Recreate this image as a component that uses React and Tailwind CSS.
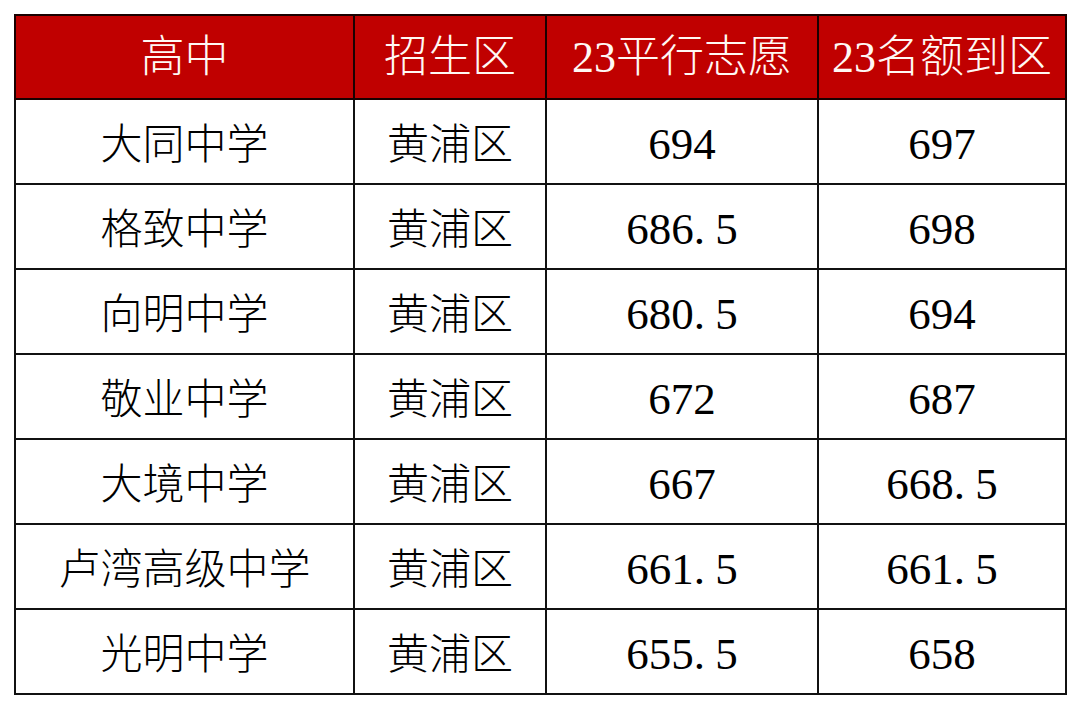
const rows = [
  ['大同中学', '黄浦区', '694', '697'],
  ['格致中学', '黄浦区', '686.5', '698'],
  ['向明中学', '黄浦区', '680.5', '694'],
  ['敬业中学', '黄浦区', '672', '687'],
  ['大境中学', '黄浦区', '667', '668.5'],
  ['卢湾高级中学', '黄浦区', '661.5', '661.5'],
  ['光明中学', '黄浦区', '655.5', '658'],
];

const headers = ['高中', '招生区', '23平行志愿', '23名额到区'];

const fontStack = {
  fontFamily: '"Liberation Serif", "Noto Sans CJK SC", serif',
};

// SimSun style: the period takes a full half-width cell
const Num = ({ value }) => {
  const [a, b] = value.split('.');
  if (b === undefined) return <span className="text-[45px] font-normal">{a}</span>;
  return (
    <span className="text-[45px] font-normal">
      {a}
      <span className="inline-block w-[0.48em] text-left">.</span>
      {b}
    </span>
  );
};

export default function App() {
  return (
    <div className="w-[1080px] h-[707px] bg-white pt-[14px] pl-[14px]" style={fontStack}>
      <table className="table-fixed border-collapse w-[1051px] text-[42px] font-light leading-none text-black">
        <colgroup>
          <col className="w-[339px]" />
          <col className="w-[192px]" />
          <col className="w-[272px]" />
          <col className="w-[248px]" />
        </colgroup>
        <thead>
          <tr className="h-[84px] bg-[#c00000]">
            {headers.map((h) => (
              <th
                key={h}
                className="border-2 border-[#1a0000] font-light text-[44px] text-[#fff8f4] text-center align-middle whitespace-nowrap p-0 pt-[2px]"
              >
                {h}
              </th>
            ))}
          </tr>
        </thead>
        <tbody>
          {rows.map((r) => (
            <tr key={r[0]} className="h-[85px]">
              <td className="border-2 border-[#111] text-center align-middle p-0 pt-[6px]">{r[0]}</td>
              <td className="border-2 border-[#111] text-center align-middle p-0 pt-[6px]">{r[1]}</td>
              <td className="border-2 border-[#111] text-center align-middle p-0 pt-[6px]">
                <Num value={r[2]} />
              </td>
              <td className="border-2 border-[#111] text-center align-middle p-0 pt-[6px]">
                <Num value={r[3]} />
              </td>
            </tr>
          ))}
        </tbody>
      </table>
    </div>
  );
}
